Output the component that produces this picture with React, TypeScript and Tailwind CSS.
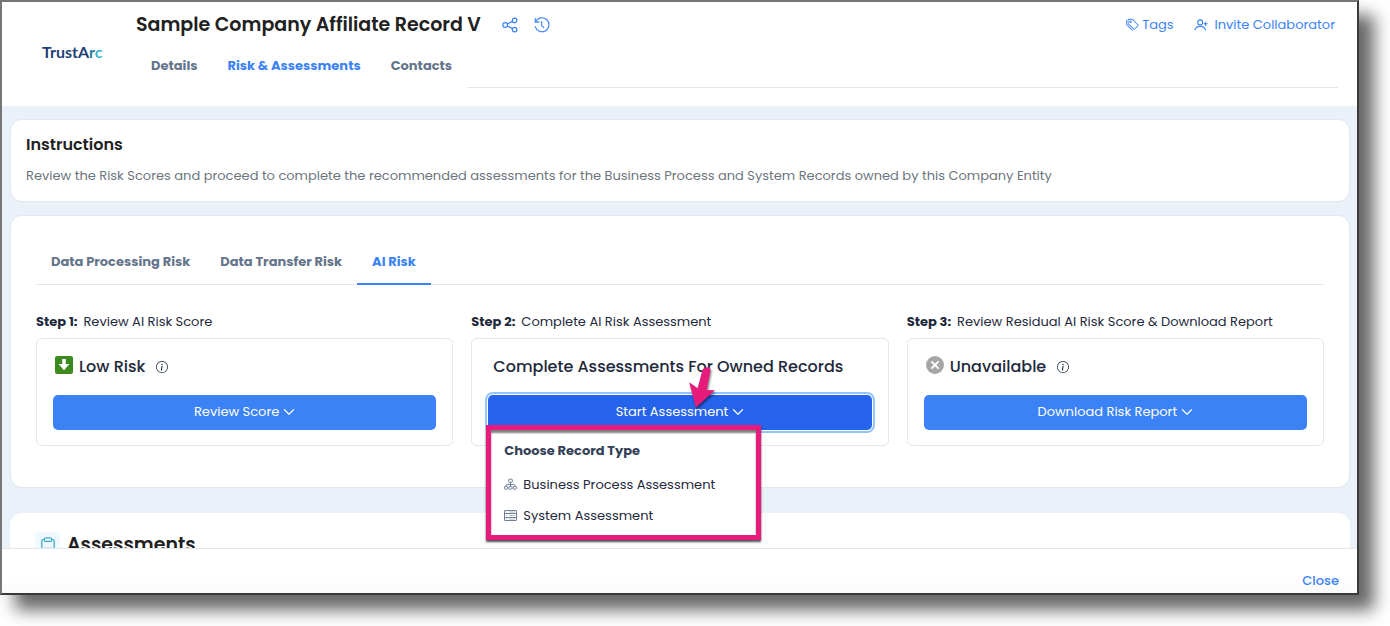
import React, { useState } from 'react';
import { BsChevronDown, BsInfoCircle, BsTags } from 'react-icons/bs';

const recordTabs = ['Details', 'Risk & Assessments', 'Contacts'];
const riskTabs = ['Data Processing Risk', 'Data Transfer Risk', 'AI Risk'];

const ShareIcon = () => (
  <svg className="h-4 w-4" viewBox="0 0 16 16" fill="none" stroke="currentColor" strokeWidth="1.2">
    <circle cx="3.2" cy="8" r="2.4" />
    <circle cx="12.6" cy="3.4" r="2.3" />
    <circle cx="12.6" cy="12.6" r="2.3" />
    <path d="M5.4 7 10.5 4.4M5.4 9l5.1 2.6" />
  </svg>
);

const HistoryIcon = () => (
  <svg className="h-4 w-4" viewBox="0 0 16 16" fill="none" stroke="currentColor" strokeWidth="1.1" strokeLinecap="round" strokeLinejoin="round">
    <path d="M1.6 4.8A7 7 0 1 1 1.2 9.6" />
    <path d="M1.2 1.2v3.9h4" />
    <path d="M7.6 4.6v3.8l2.2 2.2" />
  </svg>
);

const InviteIcon = () => (
  <svg className="h-3.5 w-3.5" viewBox="0 0 14 14" fill="none" stroke="currentColor" strokeWidth="1.1" strokeLinecap="round">
    <circle cx="6.2" cy="4.4" r="2.5" />
    <path d="M1 12c.5-2.4 2.6-3.6 5.2-3.6s4.7 1.2 5.2 3.6" />
    <path d="M11.6 4.2v3.2M10 5.8h3.2" />
  </svg>
);

const SitemapIcon = () => (
  <svg className="h-[13px] w-[13px] text-[#64748b]" viewBox="0 0 13 13" fill="none" stroke="currentColor" strokeWidth="0.9">
    <rect x="4.7" y="1.2" width="3.6" height="3.2" rx="0.6" />
    <rect x="0.6" y="8.4" width="3.1" height="2.8" rx="0.6" />
    <rect x="4.95" y="8.4" width="3.1" height="2.8" rx="0.6" />
    <rect x="9.3" y="8.4" width="3.1" height="2.8" rx="0.6" />
    <path d="M6.5 4.4v4M2.1 8.4V7.6c0-.7.4-1.1 1.1-1.1h6.6c.7 0 1.1.4 1.1 1.1v.8" />
  </svg>
);

const ServerIcon = () => (
  <svg className="h-[13px] w-[13px] text-[#64748b]" viewBox="0 0 13 13" fill="none" stroke="currentColor" strokeWidth="0.9">
    <rect x="0.5" y="1.5" width="12" height="10" rx="0.4" />
    <path d="M0.5 4.5h12M0.5 8.5h12" />
    <path d="M2 3h1M2 6.5h1M2 10h1M5 3h6M5 6.5h6M5 10h6" strokeWidth="0.5" />
  </svg>
);

const ClipboardIcon = () => (
  <svg className="h-4 w-4 text-[#3fa9c5]" viewBox="0 0 16 16" fill="none" stroke="currentColor" strokeWidth="1.2">
    <path d="M4.5 2.6H3.2c-.8 0-1.4.6-1.4 1.4v9.6c0 .8.6 1.4 1.4 1.4h9.6c.8 0 1.4-.6 1.4-1.4V4c0-.8-.6-1.4-1.4-1.4h-1.3" />
    <rect x="4.5" y="0.8" width="7" height="3.6" rx="1" />
    <path d="M4.6 11h1.2M7.4 11h1.2M10.2 11h1.2" />
  </svg>
);

const LowRiskIcon = () => (
  <svg className="h-[18px] w-[18px]" viewBox="0 0 18 18">
    <rect width="18" height="18" rx="2" fill="#3d8b1f" />
    <path d="M7.2 3h3.6v5h3.6L9 14.2 3.6 8h3.6z" fill="#fff" />
  </svg>
);

const UnavailableIcon = () => (
  <svg className="h-[18px] w-[18px]" viewBox="0 0 18 18">
    <circle cx="9" cy="9" r="9" fill="#a6a6a6" />
    <path d="M5.4 5.4l7.2 7.2M12.6 5.4l-7.2 7.2" stroke="#fff" strokeWidth="2" />
  </svg>
);

const PointerArrow = () => (
  <svg
    className="pointer-events-none absolute -top-8 left-1/2 z-20 ml-2 h-12 w-8 drop-shadow-[1px_2px_1px_rgba(0,0,0,0.5)]"
    viewBox="0 0 32 48"
    fill="#e61b7b"
  >
    <path d="M18.4 4.4c2.2-.8 4.6.4 4 3l-3.6 19.6 8.2.2L7.8 44.6 1.2 19.2l8.4 6 4.8-18c.6-1.4 2-2.4 4-2.8z" />
  </svg>
);

interface StepProps {
  step: number;
  label: string;
  title: string;
  icon?: React.ReactNode;
  action: string;
  open?: boolean;
  onToggle?: () => void;
  children?: React.ReactNode;
}

const StepCard = ({ step, label, title, icon, action, open, onToggle, children }: StepProps) => (
  <section className="min-w-0 flex-1">
    <p className="flex gap-1.5 text-[13px] leading-5 whitespace-nowrap text-[#1e293b]">
      <strong className="font-bold">Step {step}:</strong>
      {label}
    </p>
    <div className="mt-1.5 rounded-md border border-slate-200 px-4 pt-4 pb-[15px]">
      <div className={`flex h-6 items-center ${icon ? 'pl-0.5' : 'pl-[5px]'}`}>
        {icon && <span className="mr-1.5 -mt-1">{icon}</span>}
        <h3 className="text-base font-medium whitespace-nowrap text-[#1e293b]">{title}</h3>
        {icon && (
          <button type="button" aria-label={`About ${title}`} className="ml-[11px] text-[#1e293b]">
            <BsInfoCircle className="h-3 w-3" />
          </button>
        )}
      </div>
      <div className="relative mt-4">
        <button
          type="button"
          onClick={onToggle}
          className={`flex h-[35px] w-full items-center justify-center gap-1 rounded-[5px] pb-0.5 text-[13px] text-white ${
            open ? 'bg-[#2563eb] outline-2 outline-offset-1 outline-[#93c5fd]' : 'bg-[#3b82f6]'
          }`}
        >
          {action}
          <BsChevronDown className="h-3 w-3 stroke-1" />
        </button>
        {children}
      </div>
    </div>
  </section>
);

const RecordTypeMenu = () => (
  <div className="absolute top-[30px] -left-0.5 z-10 w-[275px] border-5 border-[#e61b7b] bg-white px-[13px] pt-[7px] pb-1 shadow-[0_2px_2px_rgba(0,0,0,0.7),inset_0_3px_2px_rgba(0,0,0,0.5)]">
    <h4 className="py-1 text-[13px] leading-5 font-bold text-[#334155]">Choose Record Type</h4>
    <ul className="mt-1">
      <li>
        <button type="button" className="flex h-[31px] items-center gap-1.5 text-[13px] text-[#1e293b]">
          <SitemapIcon />
          Business Process Assessment
        </button>
      </li>
      <li>
        <button type="button" className="flex h-[31px] items-center gap-1.5 text-[13px] text-[#1e293b]">
          <ServerIcon />
          System Assessment
        </button>
      </li>
    </ul>
  </div>
);

const App = () => {
  const [recordTab, setRecordTab] = useState('Risk & Assessments');
  const [riskTab, setRiskTab] = useState('AI Risk');
  const [menuOpen, setMenuOpen] = useState(true);

  return (
    <div className="h-screen overflow-hidden bg-white pr-[31px] pb-[31px] font-[Poppins,Inter,sans-serif]">
      <div className="flex h-full flex-col border-2 border-t-[#767676] border-r-[#3a3a3a] border-b-[#3a3a3a] border-l-[#767676] bg-white shadow-[15px_15px_16px_rgba(0,0,0,0.6)]">
        {/* Header */}
        <header className="flex h-[104px] shrink-0 bg-white pr-[19px]">
          <div className="flex w-[134px] shrink-0 items-center pb-1 pl-10">
            <span className="font-[Lato,sans-serif] text-base font-bold text-[#1f4276]">
              TrustA<span className="text-[#2b7f9f]">r</span>
              <span className="text-[#3fb8cf]">c</span>
            </span>
          </div>
          <div className="flex-1">
            <div className="flex h-[45px] items-center">
              <h1 className="pt-0.5 text-[19px] font-semibold text-[#212121]">Sample Company Affiliate Record V</h1>
              <div className="ml-[21px] flex gap-4 text-[#3b82f6]">
                <button type="button" aria-label="Share"><ShareIcon /></button>
                <button type="button" aria-label="History"><HistoryIcon /></button>
              </div>
              <div className="ml-auto flex items-center gap-5 pr-[3px] text-[13px] text-[#3b82f6]">
                <button type="button" className="flex items-center gap-[3px]">
                  <BsTags className="h-[13px] w-[13px]" />
                  Tags
                </button>
                <button type="button" className="flex items-center gap-[7px]">
                  <InviteIcon />
                  Invite Collaborator
                </button>
              </div>
            </div>
            <nav className="flex h-[41px]">
              {recordTabs.map(tab => (
                <button
                  key={tab}
                  type="button"
                  onClick={() => setRecordTab(tab)}
                  className={`px-[15px] pb-1 text-[13px] font-bold ${tab === recordTab ? 'text-[#3b82f6]' : 'text-[#64748b]'}`}
                >
                  {tab}
                </button>
              ))}
              <div className="flex-1 border-b border-slate-200" />
            </nav>
          </div>
        </header>

        {/* Content */}
        <main className="min-h-0 flex-1 overflow-hidden bg-[#eaf1f9] pt-[13px] pr-[7px] pl-2">
          <section className="rounded-xl border border-slate-200 bg-white px-[15px] py-[13px]">
            <h2 className="text-base font-semibold text-[#212121]">Instructions</h2>
            <p className="mt-[9px] pb-0.5 text-[13px] leading-5 text-[#6c757d]">
              Review the Risk Scores and proceed to complete the recommended assessments for the Business Process and
              System Records owned by this Company Entity
            </p>
          </section>

          <section className="mt-[13px] rounded-xl border border-slate-200 bg-white px-[25px] pt-6 pb-[41px]">
            <nav className="flex h-[45px] border-b border-slate-200">
              {riskTabs.map(tab => (
                <button
                  key={tab}
                  type="button"
                  onClick={() => setRiskTab(tab)}
                  className={`-mb-px border-b-2 px-[15px] text-[13px] font-bold ${
                    tab === riskTab ? 'border-[#3b82f6] text-[#3b82f6]' : 'border-transparent text-[#64748b]'
                  }`}
                >
                  {tab}
                </button>
              ))}
            </nav>

            <div className="mt-[27px] flex gap-[18px]">
              <StepCard step={1} label="Review AI Risk Score" title="Low Risk" icon={<LowRiskIcon />} action="Review Score" />
              <StepCard
                step={2}
                label="Complete AI Risk Assessment"
                title="Complete Assessments For Owned Records"
                action="Start Assessment"
                open={menuOpen}
                onToggle={() => setMenuOpen(!menuOpen)}
              >
                <PointerArrow />
                {menuOpen && <RecordTypeMenu />}
              </StepCard>
              <StepCard
                step={3}
                label="Review Residual AI Risk Score & Download Report"
                title="Unavailable"
                icon={<UnavailableIcon />}
                action="Download Risk Report"
              />
            </div>
          </section>

          <section className="mt-[25px] rounded-xl bg-white px-[25px] py-[19px]">
            <div className="flex items-center gap-[7px]">
              <span className="flex h-[25px] w-[25px] items-center justify-center rounded bg-[#f0f9ff]">
                <ClipboardIcon />
              </span>
              <h2 className="text-[19px] leading-6 font-semibold text-[#212121]">Assessments</h2>
            </div>
          </section>
        </main>

        {/* Footer */}
        <footer className="flex h-[45px] shrink-0 items-end justify-end border-t border-gray-200 bg-gradient-to-b from-white from-60% to-[#fafafa] pr-[18px] pb-0.5">
          <button type="button" className="text-[13px] leading-5 font-medium text-[#3b82f6]">
            Close
          </button>
        </footer>
      </div>
    </div>
  );
};

export default App;
